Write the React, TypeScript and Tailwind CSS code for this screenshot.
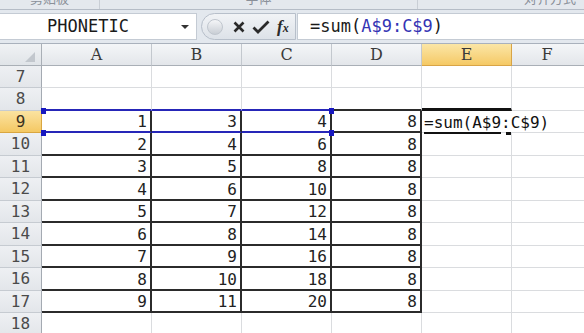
const mono = "font-['DejaVu_Sans_Mono','Liberation_Mono',monospace]";

const DATA: Record<number, number[]> = {
  9: [1, 3, 4, 8],
  10: [2, 4, 6, 8],
  11: [3, 5, 8, 8],
  12: [4, 6, 10, 8],
  13: [5, 7, 12, 8],
  14: [6, 8, 14, 8],
  15: [7, 9, 16, 8],
  16: [8, 10, 18, 8],
  17: [9, 11, 20, 8],
};

const ROWS = [7, 8, 9, 10, 11, 12, 13, 14, 15, 16, 17, 18];
const COL_W = ["w-[110px]", "w-[90px]", "w-[90px]", "w-[90px]", "w-[90px]"];

function cellBorder(row: number, col: number) {
  const inData = row >= 9 && row <= 17 && col <= 3;
  let right = "border-r border-r-[#dadcdf]";
  let bottom = "border-b border-b-[#dadcdf]";
  if (inData) {
    right = "border-r-2 border-r-[#2b2b2b]";
    bottom = "border-b-2 border-b-[#2b2b2b]";
  }
  if (row === 9 && col <= 2) bottom = "border-b-2 border-b-[#2626b8]";
  if (row === 8 && col <= 2) bottom = "border-b-2 border-b-[#2626b8]";
  if (row === 8 && col === 3) bottom = "border-b-2 border-b-[#2b2b2b]";
  if (row === 8 && col === 4) bottom = "border-b-[3px] border-b-[#111]";
  if (row === 9 && col === 4) right = "border-r-0";
  return `${right} ${bottom}`;
}

function FormulaInCell() {
  return (
    <span className="whitespace-nowrap text-[#111]">
      <span className="border-b-2 border-[#111]">=sum(A$9</span>
      <span className="relative">
        :
        <span className="absolute left-[5px] -bottom-[3px] w-[5px] h-[3px] bg-[#111]" />
      </span>
      C$9)
    </span>
  );
}

function Row({ row }: { row: number }) {
  const h = row % 2 === 1 ? "h-[22px]" : "h-[23px]";
  const sel = row === 9;
  const vals = DATA[row];
  return (
    <div className={`flex ${h}`}>
      <div
        className={`w-[42px] shrink-0 flex items-center justify-center text-[16px] border-r border-b ${
          sel
            ? "bg-gradient-to-b from-[#fbe3a0] to-[#f4c862] border-r-[#d9a640] border-b-[#d9a640] text-[#3a3020]"
            : "bg-gradient-to-b from-[#eef0f3] to-[#e3e6ea] border-r-[#a4aab2] border-b-[#c6cbd1] text-[#4a4a4a]"
        }`}
      >
        {row}
      </div>
      {[0, 1, 2, 3, 4].map((c) => (
        <div
          key={c}
          className={`${COL_W[c]} shrink-0 flex items-end pr-[3px] text-[16px] leading-[19px] ${cellBorder(row, c)} ${
            c === 4 ? "justify-start pl-[2px] overflow-visible relative z-10" : "justify-end"
          }`}
        >
          {vals && c <= 3 ? vals[c] : null}
          {row === 9 && c === 4 ? <FormulaInCell /> : null}
        </div>
      ))}
      <div className="flex-1 border-b border-b-[#dadcdf]" />
    </div>
  );
}

export default function App() {
  return (
    <div className={`w-[584px] h-[333px] overflow-hidden bg-white ${mono} text-[#222]`}>
      {/* ribbon bottom */}
      <div className="h-[10px] bg-[#e4e8ed] border-b border-[#b5bcc6] flex overflow-hidden text-[13px] text-[#8a9099] font-['Noto_Sans_CJK_SC',sans-serif]">
        <div className="w-[100px] border-r border-[#c9ced5] flex justify-center">
          <span className="-mt-[12px]">剪贴板</span>
        </div>
        <div className="w-[318px] border-r border-[#c9ced5] flex justify-center">
          <span className="-mt-[12px]">字体</span>
        </div>
        <div className="flex-1 flex justify-end pr-[8px]">
          <span className="-mt-[12px]">对齐方式</span>
        </div>
      </div>

      {/* formula bar */}
      <div className="h-[34px] bg-[#e3e8ee] border-b border-[#a9b1bc] flex items-center">
        <div className="w-[197px] h-[27px] bg-white border border-[#c4cbd4] border-l-0 flex items-center">
          <span className="flex-1 text-center text-[17px] text-[#1a1a1a]">PHONETIC</span>
          <svg width="18" height="10" viewBox="0 0 18 10" className="mr-[2px]">
            <path d="M5 3 L13 3 L9 7 Z" fill="#333" />
          </svg>
        </div>
        <div className="ml-[4px] w-[95px] h-[27px] rounded-l-full bg-gradient-to-b from-[#f1f3f6] to-[#dde2e8] border border-[#b7bfca] flex items-center">
          <div className="ml-[5px] w-[16px] h-[16px] rounded-full bg-gradient-to-b from-[#f5f6f8] to-[#c9ced5] border border-[#c0c6ce]" />
          <svg width="14" height="14" viewBox="0 0 14 14" className="ml-[9px]">
            <path d="M2.5 2.5 L11.5 11.5 M11.5 2.5 L2.5 11.5" stroke="#2a2a2a" strokeWidth="2.6" />
          </svg>
          <svg width="18" height="16" viewBox="0 0 18 16" className="ml-[6px]">
            <path d="M1.5 8.5 L6 13 L16.5 2.5" stroke="#2a2a2a" strokeWidth="2.8" fill="none" />
          </svg>
          <span className="ml-[7px] font-['Liberation_Serif',serif] italic font-bold text-[17px] text-[#2a2a2a] leading-none">
            f<span className="text-[12px]">x</span>
          </span>
        </div>
        <div className="flex-1 h-[27px] bg-white border border-[#c4cbd4] border-r-0 ml-[1px] pl-[12px] flex items-center text-[17px] whitespace-nowrap text-[#1a1a1a]">
          =sum(<span className="text-[#3434b4]">A$9:C$9</span>)
        </div>
      </div>

      {/* column headers */}
      <div className="flex h-[22px] text-[16px] text-[#3a3a3a] font-['DejaVu_Serif',serif]">
        <div className="w-[42px] shrink-0 bg-gradient-to-b from-[#f0f2f4] to-[#e0e4e8] border-r border-b border-[#a9afb6] relative">
          <svg width="10" height="10" viewBox="0 0 10 10" className="absolute right-[6px] bottom-[3px]">
            <path d="M10 0 L10 10 L0 10 Z" fill="#c2c7cd" />
          </svg>
        </div>
        {["A", "B", "C", "D", "E"].map((l, i) => (
          <div
            key={l}
            className={`${COL_W[i]} shrink-0 flex items-center justify-center border-r border-b ${
              l === "E"
                ? "bg-gradient-to-b from-[#fbe6a6] to-[#f5c964] border-[#d8a446]"
                : "bg-gradient-to-b from-[#f4f6f8] to-[#e3e6ea] border-r-[#c3c8ce] border-b-[#a9afb6]"
            }`}
          >
            {l}
          </div>
        ))}
        <div className="flex-1 flex items-center justify-center bg-gradient-to-b from-[#f4f6f8] to-[#e3e6ea] border-b border-[#a9afb6] pr-[2px]">
          F
        </div>
      </div>

      {/* rows */}
      <div className="relative">
        {ROWS.map((r) => (
          <Row key={r} row={r} />
        ))}
        {/* selection handles */}
        <div className="absolute left-[41px] top-[42px] w-[5px] h-[6px] bg-[#1818c0] z-20" />
        <div className="absolute left-[41px] top-[64px] w-[5px] h-[6px] bg-[#1818c0] z-20" />
        <div className="absolute left-[329px] top-[42px] w-[5px] h-[6px] bg-[#1818c0] z-20" />
        <div className="absolute left-[329px] top-[64px] w-[5px] h-[6px] bg-[#1818c0] z-20" />
      </div>
    </div>
  );
}
